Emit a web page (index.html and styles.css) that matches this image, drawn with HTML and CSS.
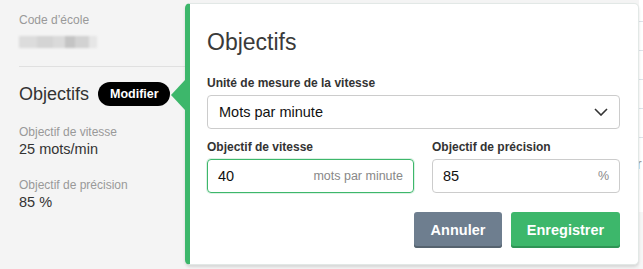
FILE: index.html
```html
<!DOCTYPE html>
<html lang="fr">
<head>
<meta charset="utf-8">
<link rel="stylesheet" href="styles.css">
</head>
<body>
<div class="page">
  <aside class="side">
    <div class="field code">
      <div class="muted">Code d’école</div>
      <div class="blurcode"><span class="b1"></span><span class="b2"></span><span class="b3"></span><span class="b4"></span><span class="b5"></span><span class="b6"></span></div>
    </div>
    <hr class="divider">
    <div class="head">
      <h2 class="side-title">Objectifs</h2>
      <span class="pill">Modifier</span>
    </div>
    <div class="field">
      <div class="muted">Objectif de vitesse</div>
      <div class="value">25 mots/min</div>
    </div>
    <div class="field">
      <div class="muted">Objectif de précision</div>
      <div class="value">85 %</div>
    </div>
  </aside>
  <main class="back">
    <div class="rows">
      <div class="row"></div><div class="row"></div><div class="row"></div><div class="row"></div><div class="row"></div>
      <div class="rowtext">r</div>
    </div>
    <div class="band"></div>
  </main>

  <div class="popover">
    <span class="arrow"></span>
    <h1 class="pop-title">Objectifs</h1>
    <label class="lbl">Unité de mesure de la vitesse</label>
    <div class="select">
      <span>Mots par minute</span>
      <svg class="chev" width="14" height="8" viewBox="0 0 14 8"><path d="M1 1l6 6 6-6" fill="none" stroke="#333" stroke-width="1.6"/></svg>
    </div>
    <div class="grid">
      <div class="col">
        <label class="lbl">Objectif de vitesse</label>
        <div class="input focus"><span class="val">40</span><span class="unit">mots par minute</span></div>
      </div>
      <div class="col">
        <label class="lbl">Objectif de précision</label>
        <div class="input"><span class="val">85</span><span class="unit">%</span></div>
      </div>
    </div>
    <div class="actions">
      <button class="btn cancel">Annuler</button>
      <button class="btn save">Enregistrer</button>
    </div>
  </div>
</div>
</body>
</html>
```
FILE: styles.css
```css
* { box-sizing: border-box; }
html, body { margin: 0; padding: 0; }
body {
  width: 643px;
  height: 269px;
  overflow: hidden;
  font-family: "Liberation Sans", Arial, sans-serif;
  color: #333;
  background: #f4f4f4;
}
.page {
  position: relative;
  display: flex;
  height: 269px;
}
.side {
  width: 639px;
  flex: none;
  padding: 13px 0 0 19px;
  background: #f4f4f4;
}
.back {
  flex: 1;
  background: #fff;
  position: relative;
}
.rows { padding-top: 21px; }
.row { height: 29px; border-top: 1px solid #dde3ea; }
.rowtext { font-size: 14px; color: #999; margin-top: -10px; margin-left: -2px; }
.band { position: absolute; left: 0; right: 0; top: 212px; bottom: 0; background: #f6f6f6; }

.field { margin-bottom: 20px; }
.field.code { margin-bottom: 18px; }
.muted { font-size: 12px; color: #999; line-height: 15px; }
.value { font-size: 14.5px; color: #333; line-height: 17px; margin-top: 1px; }
.blurcode {
  display: flex;
  margin-top: 8px;
  height: 12px;
  width: 80px;
  filter: blur(1px);
}
.blurcode span { height: 12px; }
.b1 { width: 18px; background: #dcdcdc; }
.b2 { width: 16px; background: #d4d4d4; }
.b3 { width: 12px; background: #dadada; }
.b4 { width: 10px; background: #c4c4c4; }
.b5 { width: 14px; background: #d2d2d2; }
.b6 { width: 8px; background: #e6e6e6; }
.divider {
  border: 0;
  border-top: 1px solid #e0e0e0;
  margin: 0 0 15px 0;
  width: 170px;
}
.head {
  display: flex;
  align-items: center;
  gap: 9px;
  margin-bottom: 19px;
}
.side-title {
  margin: 0;
  font-size: 18px;
  font-weight: normal;
  color: #333;
  line-height: 24px;
}
.pill {
  background: #000;
  color: #fff;
  font-weight: bold;
  font-size: 12.5px;
  border-radius: 12px;
  padding: 0 11px 0 12px;
  height: 24px;
  line-height: 24px;
}

.popover {
  position: absolute;
  left: 185px;
  top: 3px;
  width: 454px;
  height: 262px;
  background: #fff;
  border: 1px solid #e2e8e6;
  border-left: 5px solid #3db76b;
  border-radius: 5px;
  box-shadow: 0 2px 3px rgba(0,0,0,0.12);
  padding: 22px 18px 0 17px;
}
.arrow {
  position: absolute;
  left: -19px;
  top: 76px;
  width: 0; height: 0;
  border-top: 15px solid transparent;
  border-bottom: 15px solid transparent;
  border-right: 14px solid #3db76b;
}
.pop-title {
  margin: 0 0 18px;
  font-size: 23px;
  font-weight: normal;
  line-height: 32px;
  color: #3a3a3a;
}
.lbl {
  display: block;
  font-size: 12px;
  font-weight: bold;
  color: #333;
  line-height: 15px;
  margin-bottom: 4px;
}
.select {
  display: flex;
  align-items: center;
  justify-content: space-between;
  height: 34px;
  border: 1px solid #ccc;
  border-radius: 4px;
  padding: 0 11px;
  font-size: 14.5px;
  color: #111;
  margin-bottom: 11px;
}
.grid {
  display: grid;
  grid-template-columns: 207px 188px;
  gap: 18px;
}
.input {
  display: flex;
  align-items: center;
  justify-content: space-between;
  height: 34px;
  border: 1px solid #ccc;
  border-radius: 4px;
  padding: 0 10px;
}
.input.focus {
  border-color: #3db76b;
  box-shadow: 0 0 0 1px rgba(61,183,107,0.18);
}
.val { font-size: 14.5px; color: #111; }
.unit { font-size: 12.5px; color: #888; }
.actions {
  display: flex;
  justify-content: flex-end;
  gap: 9px;
  margin-top: 19px;
}
.btn {
  border: 0;
  border-radius: 3px;
  height: 36px;
  font-family: "Liberation Sans", Arial, sans-serif;
  font-weight: bold;
  font-size: 14.5px;
  color: #fff;
  padding: 0;
}
.cancel { width: 88px; background: #6e7e8f; box-shadow: inset 0 -2px 0 #56636f; }
.save { width: 109px; background: #3db76b; box-shadow: inset 0 -2px 0 #2f9455; }
```
